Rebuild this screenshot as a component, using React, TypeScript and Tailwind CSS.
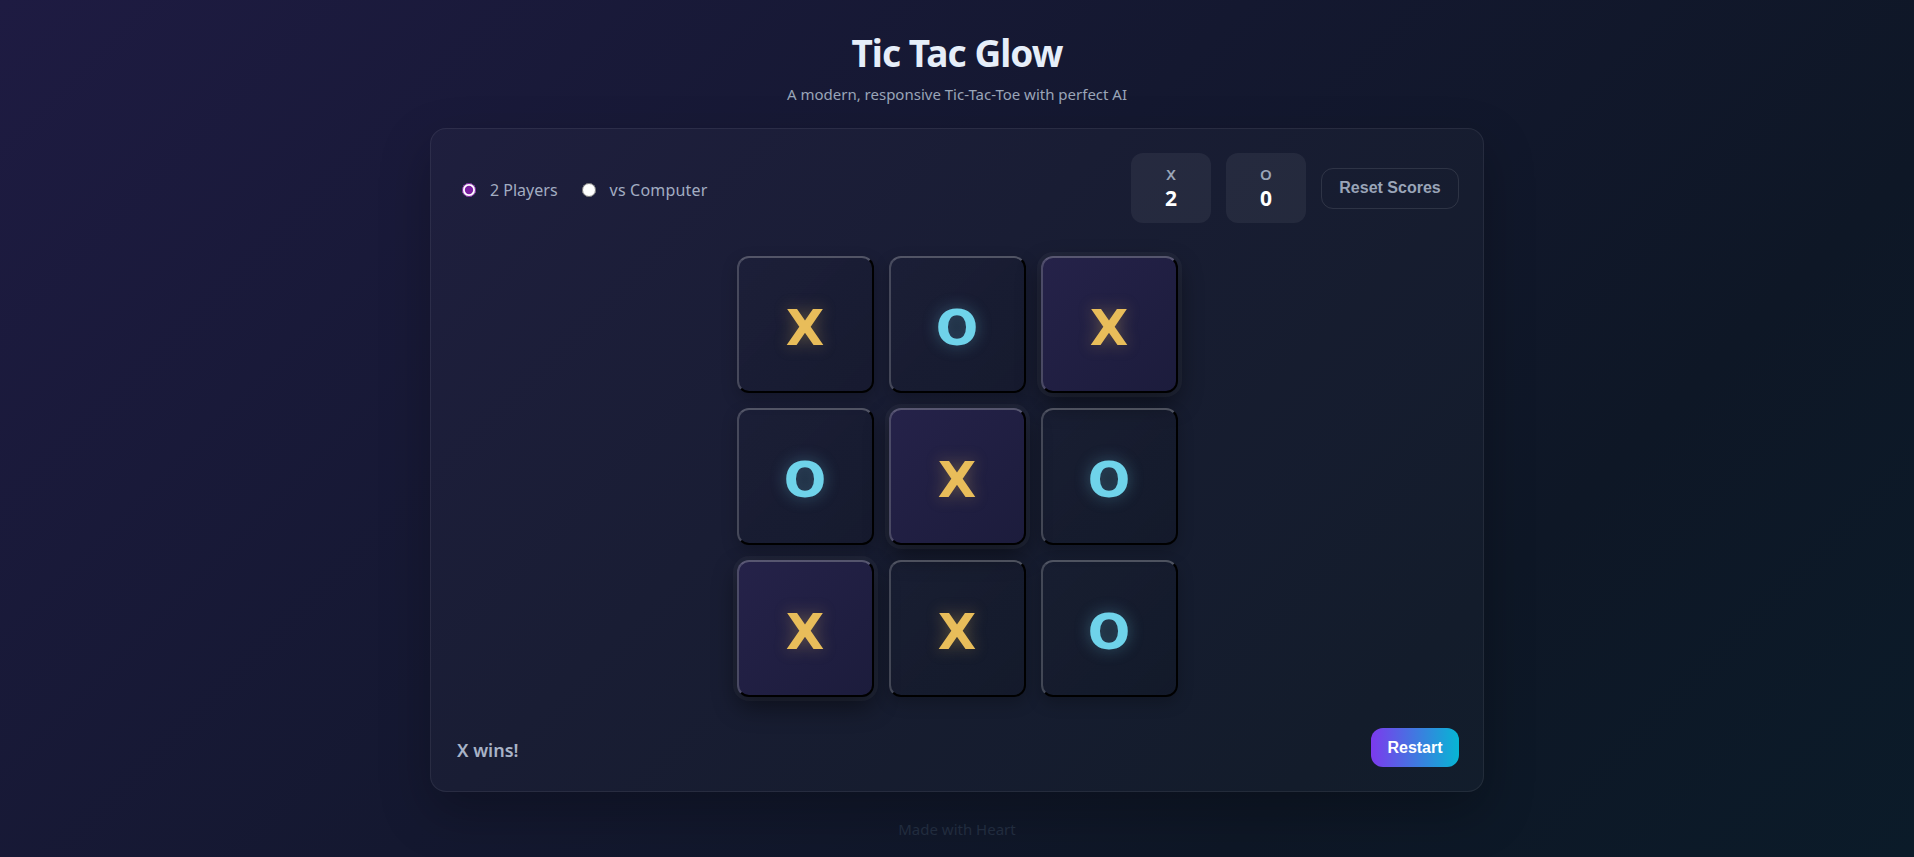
import { useState } from 'react';

type Mark = 'X' | 'O';

const BOARD: Mark[] = ['X', 'O', 'X', 'O', 'X', 'O', 'X', 'X', 'O'];
const WIN_LINE = [2, 4, 6];

function Cell({ value, win }: { value: Mark; win: boolean }) {
  const base =
    'w-[137px] h-[137px] rounded-xl border-2 border-t-white/25 border-l-white/20 border-b-black border-r-black flex items-center justify-center';
  const tone = win
    ? 'bg-[linear-gradient(135deg,#252249_0%,#1c1c3c_100%)] shadow-[0_0_0_4px_rgba(255,255,255,0.035),0_10px_24px_rgba(0,0,0,0.45)]'
    : 'bg-[linear-gradient(135deg,rgba(255,255,255,0.008)_0%,rgba(0,0,0,0.08)_100%)] shadow-[0_6px_16px_rgba(0,0,0,0.22)]';
  const mark =
    value === 'X'
      ? 'text-[#e8bd5a] [text-shadow:0_0_16px_rgba(232,189,90,0.35)]'
      : 'text-[#6fd3ea] [text-shadow:0_0_16px_rgba(111,211,234,0.35)]';
  return (
    <button className={base + ' ' + tone}>
      <span
        className={'mt-[6px] text-[50px] leading-none font-black ' + mark}
        style={{ fontFamily: '"DejaVu Sans", Verdana, sans-serif' }}
      >
        {value}
      </span>
    </button>
  );
}

export default function App() {
  const [mode, setMode] = useState<'two' | 'cpu'>('two');

  return (
    <div
      className="min-h-screen w-full flex flex-col items-center bg-[linear-gradient(135deg,#1e1b42_0%,#141830_45%,#0e1726_75%,#0b1b29_100%)]"
      style={{ fontFamily: '"Noto Sans", "Open Sans", sans-serif' }}
    >
      <h1 className="mt-[29px] text-[37px] leading-[48px] font-bold text-[#e6eef9] tracking-tight">Tic Tac Glow</h1>
      <p className="mt-[7px] text-[15px] leading-5 text-[#9aa5b8]">A modern, responsive Tic-Tac-Toe with perfect AI</p>

      {/* game card */}
      <div className="mt-[24px] w-[1054px] rounded-2xl border border-white/[0.07] bg-white/[0.025] p-6 shadow-[0_20px_50px_rgba(0,0,0,0.25)]">
        <div className="flex items-center justify-between">
          <div className="flex items-center gap-6 pl-[7px] pt-[3px] text-[16px] text-[#a3adc2]">
            <label className="flex items-center gap-[14px]">
              <input
                type="radio"
                name="mode"
                checked={mode === 'two'}
                onChange={() => setMode('two')}
                className="w-[14px] h-[14px] accent-[#7a1fa0]"
              />
              2 Players
            </label>
            <label className="flex items-center gap-[14px] tracking-[0.2px]">
              <input
                type="radio"
                name="mode"
                checked={mode === 'cpu'}
                onChange={() => setMode('cpu')}
                className="w-[14px] h-[14px] accent-[#7a1fa0]"
              />
              vs Computer
            </label>
          </div>

          <div className="flex items-center">
            <div className="w-20 h-[70px] rounded-xl bg-white/[0.06] flex flex-col items-center justify-center">
              <span className="text-[15px] leading-4 font-semibold text-[#9aa5b8]">X</span>
              <span className="mt-[4px] text-[21px] leading-6 font-bold text-white">2</span>
            </div>
            <div className="ml-[15px] w-20 h-[70px] rounded-xl bg-white/[0.06] flex flex-col items-center justify-center">
              <span className="text-[15px] leading-4 font-semibold text-[#9aa5b8]">O</span>
              <span className="mt-[4px] text-[21px] leading-6 font-bold text-white">0</span>
            </div>
            <button
              className="ml-[15px] h-[41px] w-[138px] rounded-xl border border-white/10 text-[16px] font-bold text-[#9aa5b8]"
              style={{ fontFamily: '"Liberation Sans", Arial, sans-serif' }}
            >
              Reset Scores
            </button>
          </div>
        </div>

        {/* board */}
        <div className="mt-[33px] mx-auto w-fit grid grid-cols-3 gap-[15px]">
          {BOARD.map((v, i) => (
            <Cell key={i} value={v} win={WIN_LINE.includes(i)} />
          ))}
        </div>

        <div className="mt-[31px] flex items-center justify-between">
          <span className="pl-[2px] pt-[6px] text-[18px] font-semibold text-[#a8b3c7]">X wins!</span>
          <button
            className="h-[39px] w-[88px] rounded-xl bg-[linear-gradient(90deg,#7c3aed_0%,#06b6d4_100%)] text-[16px] font-bold text-white"
            style={{ fontFamily: '"Liberation Sans", Arial, sans-serif' }}
          >
            Restart
          </button>
        </div>
      </div>

      <footer className="mt-[26px] text-[15px] text-[#212c3e]">Made with Heart</footer>
    </div>
  );
}
